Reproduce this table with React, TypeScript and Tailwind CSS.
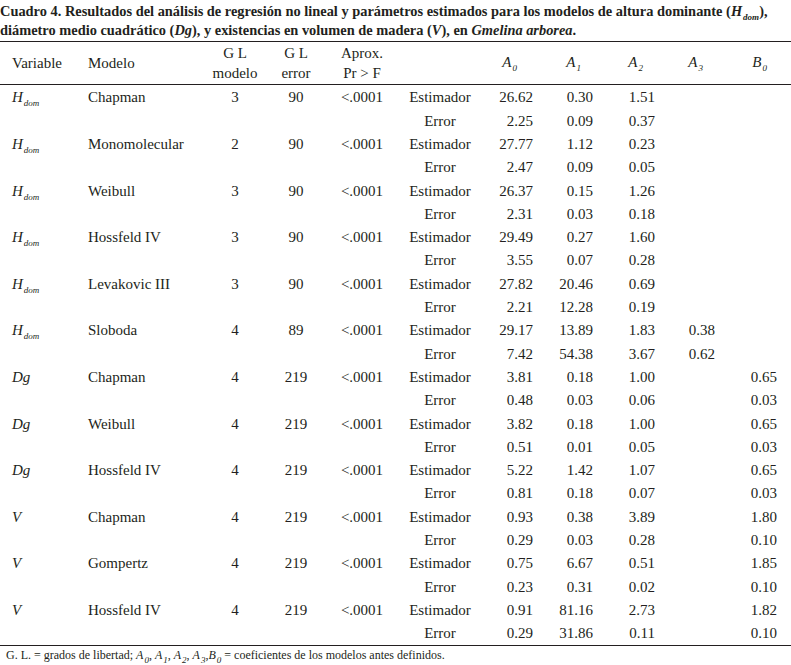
import React from "react";

type Row = {
    v: "H" | "Dg" | "V";
    modelo: string;
    gl: string;
    gle: string;
    est: string[];
    err: string[];
};

const rows: Row[] = [
    {v: "H", modelo: "Chapman", gl: "3", gle: "90", est: ["26.62", "0.30", "1.51", "", ""], err: ["2.25", "0.09", "0.37", "", ""]},
    {v: "H", modelo: "Monomolecular", gl: "2", gle: "90", est: ["27.77", "1.12", "0.23", "", ""], err: ["2.47", "0.09", "0.05", "", ""]},
    {v: "H", modelo: "Weibull", gl: "3", gle: "90", est: ["26.37", "0.15", "1.26", "", ""], err: ["2.31", "0.03", "0.18", "", ""]},
    {v: "H", modelo: "Hossfeld IV", gl: "3", gle: "90", est: ["29.49", "0.27", "1.60", "", ""], err: ["3.55", "0.07", "0.28", "", ""]},
    {v: "H", modelo: "Levakovic III", gl: "3", gle: "90", est: ["27.82", "20.46", "0.69", "", ""], err: ["2.21", "12.28", "0.19", "", ""]},
    {v: "H", modelo: "Sloboda", gl: "4", gle: "89", est: ["29.17", "13.89", "1.83", "0.38", ""], err: ["7.42", "54.38", "3.67", "0.62", ""]},
    {v: "Dg", modelo: "Chapman", gl: "4", gle: "219", est: ["3.81", "0.18", "1.00", "", "0.65"], err: ["0.48", "0.03", "0.06", "", "0.03"]},
    {v: "Dg", modelo: "Weibull", gl: "4", gle: "219", est: ["3.82", "0.18", "1.00", "", "0.65"], err: ["0.51", "0.01", "0.05", "", "0.03"]},
    {v: "Dg", modelo: "Hossfeld IV", gl: "4", gle: "219", est: ["5.22", "1.42", "1.07", "", "0.65"], err: ["0.81", "0.18", "0.07", "", "0.03"]},
    {v: "V", modelo: "Chapman", gl: "4", gle: "219", est: ["0.93", "0.38", "3.89", "", "1.80"], err: ["0.29", "0.03", "0.28", "", "0.10"]},
    {v: "V", modelo: "Gompertz", gl: "4", gle: "219", est: ["0.75", "6.67", "0.51", "", "1.85"], err: ["0.23", "0.31", "0.02", "", "0.10"]},
    {v: "V", modelo: "Hossfeld IV", gl: "4", gle: "219", est: ["0.91", "81.16", "2.73", "", "1.82"], err: ["0.29", "31.86", "0.11", "", "0.10"]},
];

const cols = "grid grid-cols-[88px_117px_60px_62px_70px_86px_50px_60px_62px_60px_62px]";

function Sym({b, s}: {b: string; s: string}) {
    return (
        <span className="italic">
            {b}
            <span className="relative top-[4px] text-[9px] ml-[1px]">{s}</span>
        </span>
    );
}

function Variable({v}: {v: Row["v"]}) {
    if (v === "H") return <Sym b="H" s="dom"/>;
    return <span className="italic">{v}</span>;
}

function ValueCells({vals}: {vals: string[]}) {
    return (
        <>
            {vals.map((x, i) => (
                <div key={i} className="text-right">{x}</div>
            ))}
        </>
    );
}

export default function App() {
    return (
        <div className="w-[791px] h-[665px] bg-white text-[#231f20] overflow-hidden"
             style={{fontFamily: '"Liberation Serif", serif'}}>
            {/* titulo */}
            <div className="font-bold text-[14.4px] leading-[17px] whitespace-nowrap pt-[3px]">
                Cuadro 4. Resultados del análisis de regresión no lineal y parámetros estimados para los modelos de altura dominante (<Sym b="H" s="dom"/>),
                <br/>
                diámetro medio cuadrático (<span className="italic">Dg</span>), y existencias en volumen de madera (<span className="italic">V</span>), en <span className="italic">Gmelina arborea</span>.
            </div>

            <div className="mt-[2px] border-t border-[#231f20]"></div>

            {/* encabezado */}
            <div className={cols + " h-[42px] items-center text-[15px] leading-[20px]"}>
                <div className="pl-[12px]">Variable</div>
                <div>Modelo</div>
                <div className="text-center">G L<br/>modelo</div>
                <div className="text-center">G L<br/>error</div>
                <div className="text-center">Aprox.<br/>Pr &gt; F</div>
                <div></div>
                <div className="text-right pr-[16px]"><Sym b="A" s="0"/></div>
                <div className="text-right pr-[12px]"><Sym b="A" s="1"/></div>
                <div className="text-right pr-[12px]"><Sym b="A" s="2"/></div>
                <div className="text-right pr-[12px]"><Sym b="A" s="3"/></div>
                <div className="text-right pr-[10px]"><Sym b="B" s="0"/></div>
            </div>

            <div className="border-t border-[#231f20]"></div>

            {/* cuerpo */}
            <div className="pt-[1px] text-[15px]">
                {rows.map((r, i) => (
                    <div key={i}>
                        <div className={cols + " h-[23.3px] items-center"}>
                            <div className="pl-[12px]"><Variable v={r.v}/></div>
                            <div>{r.modelo}</div>
                            <div className="text-center">{r.gl}</div>
                            <div className="text-center">{r.gle}</div>
                            <div className="text-center">&lt;.0001</div>
                            <div className="text-center">Estimador</div>
                            <ValueCells vals={r.est}/>
                        </div>
                        <div className={cols + " h-[23.3px] items-center"}>
                            <div></div>
                            <div></div>
                            <div></div>
                            <div></div>
                            <div></div>
                            <div className="text-center">Error</div>
                            <ValueCells vals={r.err}/>
                        </div>
                    </div>
                ))}
            </div>

            <div className="border-t border-[#231f20]"></div>

            {/* nota */}
            <div className="pl-[6px] pt-[2px] text-[12px] leading-[15px] whitespace-nowrap">
                G. L. = grados de libertad; <Sym b="A" s="0"/>, <Sym b="A" s="1"/>, <Sym b="A" s="2"/>, <Sym b="A" s="3"/>,<Sym b="B" s="0"/> = coeficientes de los modelos antes definidos.
            </div>
        </div>
    );
}
